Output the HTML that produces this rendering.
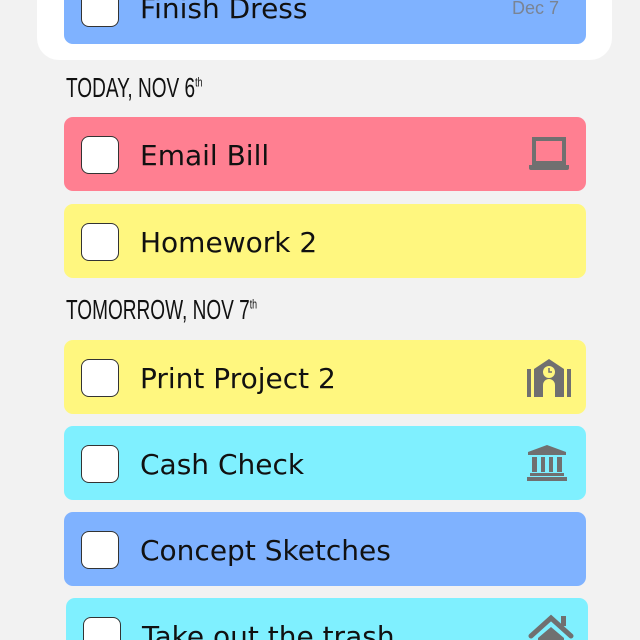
<!DOCTYPE html>
<html><head><style>
html,body{margin:0;width:640px;height:640px;overflow:hidden}
body{background:#f2f2f2;position:relative;font-family:"DejaVu Sans","Liberation Sans",sans-serif}
.panel{position:absolute;left:37px;top:-40px;width:575px;height:100px;background:#fff;border-radius:22px}
.card{position:absolute;left:64px;width:522px;height:74px;border-radius:9px}
.cb{position:absolute;left:17px;top:19px;width:36px;height:36px;background:#fff;border:1px solid #333;border-radius:8px}
.t{position:absolute;left:76px;top:21px;font-size:28px;color:#111;line-height:36px}
.h{position:absolute;left:66px;font-family:"Liberation Sans Narrow","Liberation Sans",sans-serif;font-size:28px;color:#111;transform:scaleX(.68);transform-origin:left}
.h sup{font-size:13px}
.ic{position:absolute;right:16px;top:18px}
.pink{background:#ff7f91}.yel{background:#fff77f}.cy{background:#7ff0ff}.bl{background:#7fb2ff}
</style></head><body>
<div class="panel"></div>
<div class="card bl" style="top:-30px"><div class="cb"></div><div class="t">Finish Dress</div><div style="position:absolute;right:27px;top:28px;font-size:18px;color:#7a8494;font-family:'Liberation Sans Narrow','Liberation Sans',sans-serif">Dec 7</div></div>
<div class="h" style="top:72px">TODAY, NOV 6<sup>th</sup></div>
<div class="card pink" style="top:117px"><div class="cb"></div><div class="t">Email Bill</div>
<svg class="ic" width="42" height="38" viewBox="0 0 42 38"><path d="M6 4h30v24H6z" fill="none" stroke="#707070" stroke-width="4"/><path d="M1 30h40v3a2 2 0 0 1-2 2H3a2 2 0 0 1-2-2z" fill="#707070"/></svg></div>
<div class="card yel" style="top:204px"><div class="cb"></div><div class="t">Homework 2</div></div>
<div class="h" style="top:294px">TOMORROW, NOV 7<sup>th</sup></div>
<div class="card yel" style="top:340px"><div class="cb"></div><div class="t">Print Project 2</div>
<svg class="ic" width="46" height="40" viewBox="0 0 46 40" style="right:14px;top:17px"><path d="M1 12h4v28H1zM41 12h4v28h-4zM8 12L23 2 38 12v28h-9V28a6 6 0 0 0-12 0v12H8z" fill="#707070"/><circle cx="23" cy="15" r="6" fill="#fff77f"/><path d="M23 11v4h3" stroke="#707070" stroke-width="1.5" fill="none"/></svg></div>
<div class="card cy" style="top:426px"><div class="cb"></div><div class="t">Cash Check</div>
<svg class="ic" width="42" height="40" viewBox="0 0 42 40" style="right:18px;top:18px"><path d="M21 1L2 8v3h38V8z" fill="#707070"/><path d="M6 13h5v15H6zM15 13h4v15h-4zM23 13h4v15h-4zM31 13h5v15h-5zM4 29h34v3H4zM1 33h40v4H1z" fill="#707070"/></svg></div>
<div class="card bl" style="top:512px"><div class="cb"></div><div class="t">Concept Sketches</div></div>
<div class="card cy" style="top:598px;left:66px"><div class="cb"></div><div class="t">Take out the trash</div>
<svg class="ic" width="46" height="40" viewBox="0 0 46 40" style="right:14px;top:14px"><path d="M3 24L23 6l20 18" stroke="#707070" stroke-width="5" fill="none" stroke-linecap="round"/><path d="M33 4h5v10h-5z" fill="#707070"/><path d="M10 26L23 15l13 11v14H10z" fill="#707070"/></svg></div>
</body></html>
